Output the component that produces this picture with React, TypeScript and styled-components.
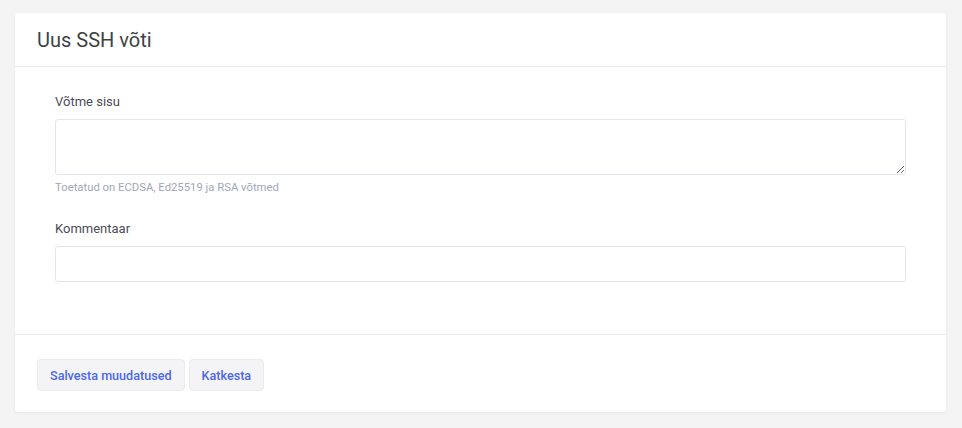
import styled, { createGlobalStyle } from 'styled-components';

const GlobalStyle = createGlobalStyle`
  html, body {
    margin: 0;
    background: #f4f4f4;
    font-family: Roboto, 'Liberation Sans', sans-serif;
  }
`;

export default function App() {
  return (
    <>
      <GlobalStyle />
      <Page>
        <Card>
          <CardHeader>
            <Title>Uus SSH võti</Title>
          </CardHeader>
          <CardBody>
            <Field>
              <Label>Võtme sisu</Label>
              <TextArea />
              <Help>Toetatud on ECDSA, Ed25519 ja RSA võtmed</Help>
            </Field>
            <Field>
              <Label>Kommentaar</Label>
              <Input type="text" />
            </Field>
          </CardBody>
          <CardFooter>
            <Button>Salvesta muudatused</Button>
            <Button>Katkesta</Button>
          </CardFooter>
        </Card>
      </Page>
    </>
  );
}

const Page = styled.div`
  padding: 13px 16px 16px 15px;
`;

const Card = styled.div`
  background: #fff;
  border-radius: 3px;
  box-shadow: 0 1px 3px rgba(0, 0, 0, 0.06);
`;

const CardHeader = styled.div`
  height: 53px;
  display: flex;
  align-items: center;
  padding: 0 22px;
  border-bottom: 1px solid #ececf2;
`;

const Title = styled.h1`
  margin: 0;
  font-size: 20px;
  font-weight: 400;
  color: #3f3f46;
`;

const CardBody = styled.div`
  padding: 26px 40px 52px;
  border-bottom: 1px solid #ececf2;
  display: flex;
  flex-direction: column;
  gap: 26px;
`;

const Field = styled.div`
  display: flex;
  flex-direction: column;
`;

const Label = styled.label`
  font-size: 13px;
  color: #4b4b55;
  line-height: 18px;
  margin-bottom: 8px;
`;

const TextArea = styled.textarea`
  box-sizing: border-box;
  height: 56px;
  border: 1px solid #e4e4ee;
  border-radius: 3px;
  resize: vertical;
  font-family: inherit;
  font-size: 13px;
  padding: 6px 10px;
  outline: none;
`;

const Help = styled.div`
  margin-top: 6px;
  font-size: 11.3px;
  color: #a1a6b8;
  line-height: 13px;
`;

const Input = styled.input`
  box-sizing: border-box;
  height: 36px;
  border: 1px solid #e4e4ee;
  border-radius: 3px;
  font-family: inherit;
  font-size: 13px;
  padding: 0 10px;
  outline: none;
`;

const CardFooter = styled.div`
  padding: 24px 22px 21px;
  display: flex;
  gap: 4px;
`;

const Button = styled.button`
  height: 32px;
  padding: 0 12px;
  border: 1px solid #ebebef;
  border-radius: 4px;
  background: #f4f4f6;
  color: #4a66f2;
  font-family: inherit;
  font-size: 12.6px;
  font-weight: 500;
  cursor: pointer;
`;
